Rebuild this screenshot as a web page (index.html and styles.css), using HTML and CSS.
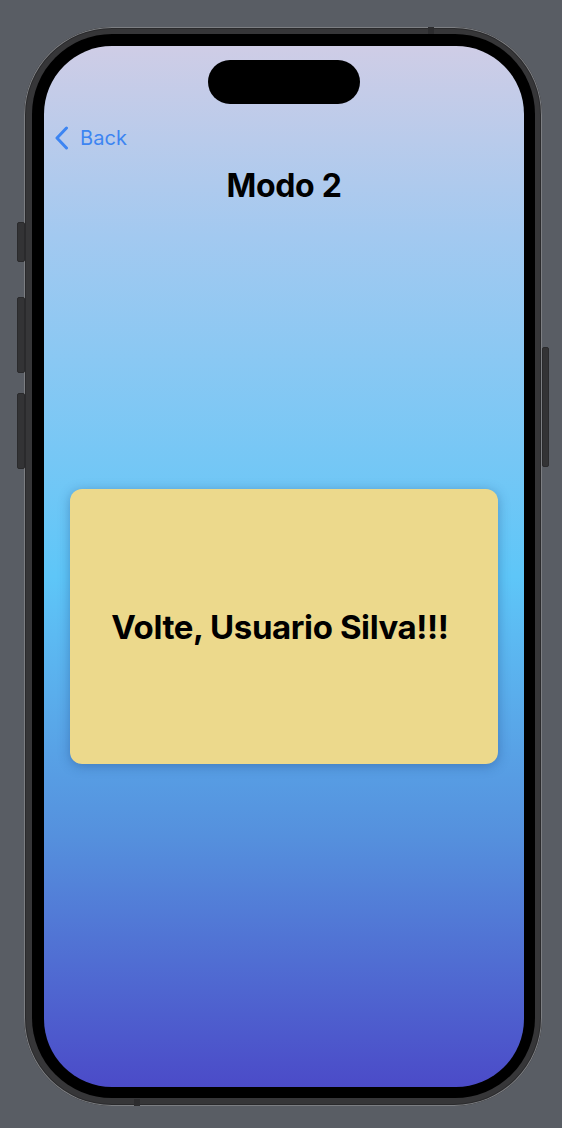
FILE: index.html
```html
<!DOCTYPE html>
<html lang="pt">
<head>
<meta charset="utf-8">
<title>Modo 2</title>
<link rel="stylesheet" href="styles.css">
</head>
<body>
<div class="stage">
  <div class="phone">
    <span class="btn btn-action"></span>
    <span class="btn btn-vol-up"></span>
    <span class="btn btn-vol-down"></span>
    <span class="btn btn-side"></span>
    <span class="band band-top"></span>
    <span class="band band-bottom"></span>
    <div class="bezel">
      <div class="screen">
        <div class="island"></div>
        <div class="nav">
          <svg class="chevron" width="14" height="24" viewBox="0 0 14 24" aria-hidden="true">
            <polyline points="11.5,2 2,12 11.5,22" fill="none" stroke="currentColor" stroke-width="3" stroke-linecap="round" stroke-linejoin="round"/>
          </svg>
          <span class="back-label">Back</span>
        </div>
        <h1 class="title">Modo 2</h1>
        <div class="card">
          <p class="card-text">Volte, Usuario Silva!!!</p>
        </div>
      </div>
    </div>
  </div>
</div>
</body>
</html>
```

FILE: styles.css
```css
* { box-sizing: border-box; }

html, body {
  margin: 0;
  padding: 0;
  height: 1128px;
  overflow: hidden;
  background: #595d64;
  font-family: Inter, "Noto Sans", "Liberation Sans", sans-serif;
}

.stage {
  padding: 27px 0 0 24px;
}

.phone {
  position: relative;
  width: 518px;
  height: 1079px;
  border-radius: 88px;
  background: #363638;
  padding: 7px 7px 8px 8px;
  box-shadow: inset 0 0 0 1px #7c7e82, inset 0 0 0 2px #2a2a2c;
}

.btn {
  position: absolute;
  background: #333335;
  border: 1px solid #2a2a2c;
  border-radius: 2px;
}
.btn-action { left: -7px; top: 195px; width: 8px; height: 40px; }
.btn-vol-up { left: -7px; top: 270px; width: 8px; height: 76px; }
.btn-vol-down { left: -7px; top: 366px; width: 8px; height: 76px; }
.btn-side { right: -7px; top: 320px; width: 7px; height: 120px; }

.band {
  position: absolute;
  width: 6px;
  height: 7px;
  background: #2c2c2e;
}
.band-top { top: 0; left: 404px; }
.band-bottom { bottom: 0; left: 110px; }

.bezel {
  height: 100%;
  background: #000;
  border-radius: 80px;
  padding: 12px 11px 11px 12px;
}

.screen {
  position: relative;
  height: 100%;
  border-radius: 68px;
  overflow: hidden;
  background: linear-gradient(180deg, #cfcde6 0%, #a3c9f0 18%, #5ec6f8 51%, #5590dd 76%, #4b4bc8 100%);
  display: flex;
  flex-direction: column;
}

.island {
  width: 152px;
  height: 44px;
  border-radius: 22px;
  background: #000;
  margin: 14px auto 0;
  flex: none;
}

.nav {
  margin-top: 12px;
  height: 44px;
  padding-left: 11px;
  display: flex;
  align-items: center;
  gap: 11px;
  color: #3d85f2;
}

.chevron { display: block; }

.back-label {
  font-size: 20px;
  line-height: 24px;
  letter-spacing: 0.1px;
}

.title {
  margin: 6px 0 0;
  font-size: 32px;
  line-height: 40px;
  font-weight: 700;
  text-align: center;
  color: #000;
  letter-spacing: -0.3px;
}

.card {
  margin: 283px 26px 0;
  height: 275px;
  border-radius: 12px;
  background: #ecd98c;
  box-shadow: 0 2px 12px rgba(20, 50, 110, 0.35);
  display: flex;
  align-items: center;
  justify-content: center;
  padding-right: 8px;
}

.card-text {
  margin: 0;
  font-size: 33px;
  font-weight: 700;
  color: #000;
  letter-spacing: -0.4px;
}
```
